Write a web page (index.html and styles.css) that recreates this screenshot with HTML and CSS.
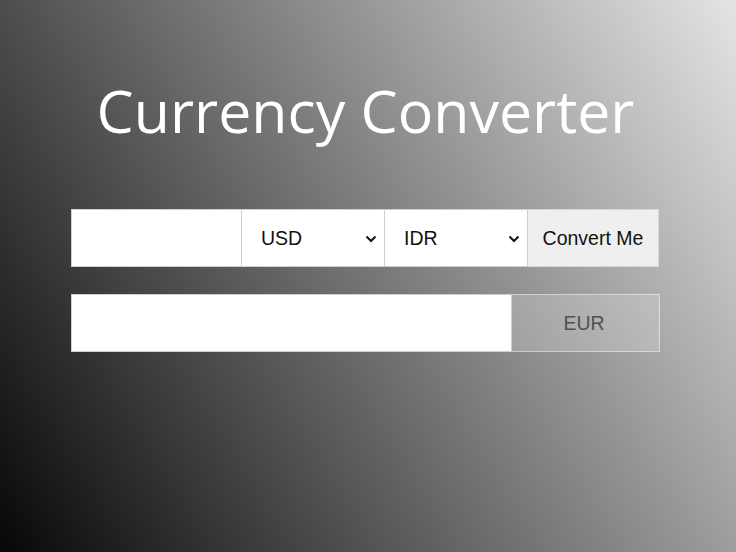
FILE: index.html
```html
<!DOCTYPE html>
<html lang="en">
<head>
<meta charset="utf-8">
<title>Currency Converter</title>
<link rel="stylesheet" href="styles.css">
</head>
<body>
  <main class="wrap">
    <h1 class="title">Currency Converter</h1>
    <form class="row row-top" onsubmit="return false">
      <input class="amount" type="text" aria-label="Amount">
      <div class="select">
        <span>USD</span>
        <svg class="chev" width="12" height="8" viewBox="0 0 12 8"><path d="M1.5 1.5 L6 6 L10.5 1.5" fill="none" stroke="#111" stroke-width="2"/></svg>
      </div>
      <div class="select">
        <span>IDR</span>
        <svg class="chev" width="12" height="8" viewBox="0 0 12 8"><path d="M1.5 1.5 L6 6 L10.5 1.5" fill="none" stroke="#111" stroke-width="2"/></svg>
      </div>
      <button class="convert" type="submit">Convert Me</button>
    </form>
    <div class="row row-bottom">
      <input class="result" type="text" aria-label="Result">
      <div class="unit">EUR</div>
    </div>
  </main>
</body>
</html>
```
FILE: styles.css
```css
* { box-sizing: border-box; }
html, body { height: 100%; }
body {
  margin: 0;
  background: linear-gradient(58deg, #070707 0%, #e4e4e4 100%);
  font-family: "Liberation Sans", Arial, sans-serif;
  overflow: hidden;
}
.wrap {
  width: 589px;
  margin-left: 71px;
  padding-top: 68px;
}
.title {
  margin: 0 0 57px;
  font-family: "Open Sans", sans-serif;
  font-weight: 400;
  font-size: 59px;
  line-height: 84px;
  color: #fff;
  text-align: center;
}
.row {
  display: flex;
  height: 58px;
}
.row-top { margin: 0 0 27px; }
.amount, .result {
  border: 1px solid #cfcfcf;
  background: #fff;
  outline: none;
  margin: 0;
  padding: 0 12px;
  font: inherit;
}
.amount { width: 171px; }
.select {
  width: 143px;
  background: #fff;
  border: 1px solid #cfcfcf;
  border-left: none;
  display: flex;
  align-items: center;
  justify-content: space-between;
  padding: 0 7px 0 19px;
  font-size: 19.5px;
  color: #111;
}
.chev { display: block; margin-top: 1px; }
.convert {
  width: 131px;
  margin: 0;
  border: 1px solid #d6d6d6;
  border-left: none;
  background: #efefef;
  font-family: inherit;
  font-size: 19.5px;
  color: #111;
  padding: 0;
}
.result { width: 441px; }
.unit {
  width: 148px;
  border: 1px solid rgba(255,255,255,0.45);
  border-left: none;
  background: rgba(255,255,255,0.2);
  display: flex;
  align-items: center;
  justify-content: center;
  font-size: 19.5px;
  color: #505050;
  padding-right: 3px;
}
```
